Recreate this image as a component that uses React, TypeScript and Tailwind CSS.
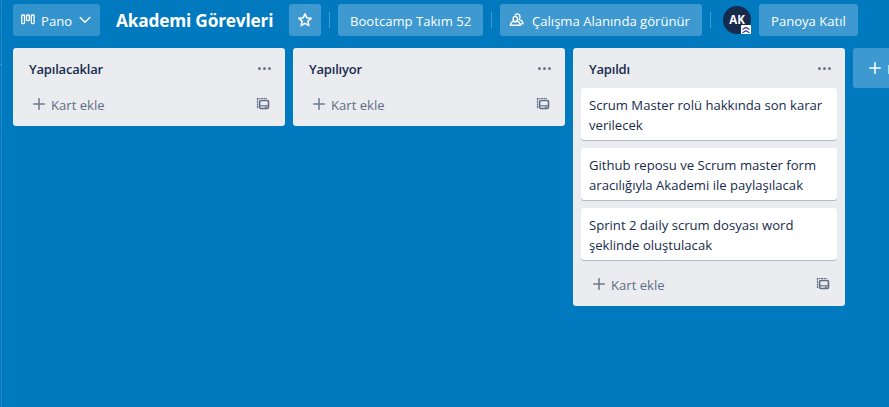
import React from "react";

type ListData = { title: string; cards: string[][] };

const lists: ListData[] = [
  { title: "Yapılacaklar", cards: [] },
  { title: "Yapılıyor", cards: [] },
  {
    title: "Yapıldı",
    cards: [
      ["Scrum Master rolü hakkında son karar", "verilecek"],
      ["Github reposu ve Scrum master form", "aracılığıyla Akademi ile paylaşılacak"],
      ["Sprint 2 daily scrum dosyası word", "şeklinde oluştulacak"],
    ],
  },
];

function BoardIcon() {
  return (
    <svg width="14" height="12" viewBox="0 0 14 12" fill="none" stroke="currentColor" strokeWidth="1.3">
      <rect x="0.7" y="1" width="2.8" height="8.6" rx="0.8" />
      <rect x="5.5" y="1" width="2.8" height="5.6" rx="0.8" />
      <rect x="10.3" y="1" width="2.8" height="8.6" rx="0.8" />
    </svg>
  );
}

function ChevronIcon() {
  return (
    <svg width="12" height="8" viewBox="0 0 12 8" fill="none" stroke="currentColor" strokeWidth="1.5" strokeLinecap="round" strokeLinejoin="round">
      <path d="M1.2 1.5 6 6.2l4.8-4.7" />
    </svg>
  );
}

function StarIcon() {
  return (
    <svg width="16" height="16" viewBox="0 0 16 16" fill="none" stroke="currentColor" strokeWidth="1.6" strokeLinejoin="round">
      <path d="m8 1.900 1.800 3.900 4.300.5-3.200 2.900.9 4.300L8 11.400l-3.800 2.100.9-4.300-3.200-2.900 4.300-.5z" />
    </svg>
  );
}

function PeopleIcon() {
  return (
    <svg width="16" height="14" viewBox="0 0 16 14" fill="none" stroke="currentColor" strokeWidth="1.4" strokeLinecap="round" strokeLinejoin="round">
      <ellipse cx="6.300" cy="6" rx="2.200" ry="2.600" />
      <path d="M1.300 12.300c.1-2 1-3.500 3.300-4.200 1 .8 2.400.8 3.400 0 2.300.7 3.300 2.200 3.400 4.200z" />
      <path d="M6.300 1.900C7.300.500 9.700.500 10.600 2.100c.7 1.300.4 3.300-.5 4.400 2.400.5 3.700 2 3.900 4.400h-1.600" />
    </svg>
  );
}

function PlusIcon({ className }: { className: string }) {
  return (
    <svg className={className} viewBox="0 0 12 12" fill="none" stroke="currentColor" strokeWidth="1.5" strokeLinecap="round">
      <path d="M6 .7v10.600M.7 6h10.600" />
    </svg>
  );
}

function TemplateIcon() {
  return (
    <svg width="14" height="13" viewBox="0 0 14 13" fill="none" stroke="currentColor">
      <path d="M1.500 11V1.500h9.500" strokeWidth="1.200" strokeDasharray="2 .6" />
      <rect x="3.600" y="3.500" width="8.900" height="8" rx="1.300" strokeWidth="1.600" />
      <path d="M3.700 8.800h8.600" strokeWidth="1.100" />
      <path d="M8.800 10.200h2.200" strokeWidth="1.200" />
    </svg>
  );
}

function Divider() {
  return <span className="h-4 w-px shrink-0 bg-white/25" />;
}

function List({ title, cards }: ListData) {
  return (
    <section className="w-[272px] shrink-0 rounded-[3px] bg-[#ebecf0] px-2">
      <header className="flex h-10 items-center justify-between pr-[6px] pl-2 text-[#172b4d]">
        <h2 className="pt-[4px] text-[13px] font-semibold tracking-[-0.2px]">{title}</h2>
        <span className="flex gap-[2px]">
          <i className="size-[3px] rounded-full bg-[#6b778c]" />
          <i className="size-[3px] rounded-full bg-[#6b778c]" />
          <i className="size-[3px] rounded-full bg-[#6b778c]" />
        </span>
      </header>
      {cards.map((lines) => (
        <article
          key={lines[0]}
          className="mb-2 h-[52px] rounded-[3px] bg-white px-2 pt-[7px] leading-5 whitespace-nowrap text-[#172b4d] shadow-[0_1px_0_#091e4240]"
        >
          {lines.map((line) => (
            <p key={line}>{line}</p>
          ))}
        </article>
      ))}
      <footer className="flex h-[38px] items-start justify-between pr-[7px] pl-3 text-[#5e6c84]">
        <button className="flex items-center gap-[6px] pt-[7px] leading-5">
          <PlusIcon className="mb-[2px] size-3 text-[#6b778c]" />
          Kart ekle
        </button>
        <span className="mt-[9px]">
          <TemplateIcon />
        </span>
      </footer>
    </section>
  );
}

export default function App() {
  return (
    <main className="h-[407px] w-[889px] overflow-hidden bg-[#0079bf] font-['Open_Sans','Noto_Sans',sans-serif] text-[13.1px]">
      <div className="flex h-full">
        <div className="flex w-[2px] shrink-0 flex-col border-r border-[#2487c6] pt-16">
          <span className="h-px w-px bg-[#4198cf]" />
        </div>
        <div className="flex min-w-0 flex-1 flex-col overflow-hidden pl-[11px]">
          <nav className="flex h-10 shrink-0 items-center whitespace-nowrap text-white">
            <button className="flex h-8 w-[87px] shrink-0 items-center rounded-[3px] bg-[#3394cd] pl-2">
              <BoardIcon />
              <span className="ml-[6px] w-[31px] pt-[3px]">Pano</span>
              <span className="ml-[7px]">
                <ChevronIcon />
              </span>
            </button>
            <h1 className="ml-4 w-[173px] shrink-0 pt-[2px] text-[17.3px] font-bold tracking-[-0.2px]">Akademi Görevleri</h1>
            <button className="flex h-8 w-8 shrink-0 items-center justify-center rounded-[3px] bg-[#3d99d0]">
              <StarIcon />
            </button>
            <span className="ml-2 flex"><Divider /></span>
            <button className="ml-2 h-8 w-[145px] shrink-0 rounded-[3px] bg-[#3d99d0] pt-[3px] pl-3 text-left">Bootcamp Takım 52</button>
            <span className="ml-2 flex"><Divider /></span>
            <button className="ml-2 flex h-8 w-[202px] shrink-0 items-center rounded-[3px] bg-[#3d99d0] pl-[9px]">
              <PeopleIcon />
              <span className="ml-[7px] pt-[3px]">Çalışma Alanında görünür</span>
            </button>
            <span className="ml-2 flex"><Divider /></span>
            <span className="relative ml-3 flex size-7 shrink-0 items-center justify-center rounded-full bg-[#172b4d] text-[11.5px] font-bold">
              AK
              <svg className="absolute right-0 bottom-0" width="10" height="9" viewBox="0 0 10 9" fill="none" stroke="#403294" strokeWidth="1.2">
                <rect width="10" height="9" rx="1" fill="#fff" stroke="none" />
                <path d="m1.500 4.400 3.500-2 3.500 2M1.500 7.700 5 5.700l3.500 2" />
              </svg>
            </span>
            <button className="ml-2 h-8 w-[99px] shrink-0 rounded-[3px] bg-[#3d99d0] pt-[3px] pl-3 text-left">Panoya Katıl</button>
          </nav>
          <div className="flex items-start gap-2 pt-2">
            {lists.map((list) => (
              <List key={list.title} {...list} />
            ))}
            <button className="flex h-10 w-[272px] shrink-0 items-center gap-[6px] rounded-[3px] bg-[#3d99d0] pl-4 text-white">
              <PlusIcon className="size-3" />
              <span className="pt-[3px]">Başka liste ekle</span>
            </button>
          </div>
        </div>
      </div>
    </main>
  );
}
